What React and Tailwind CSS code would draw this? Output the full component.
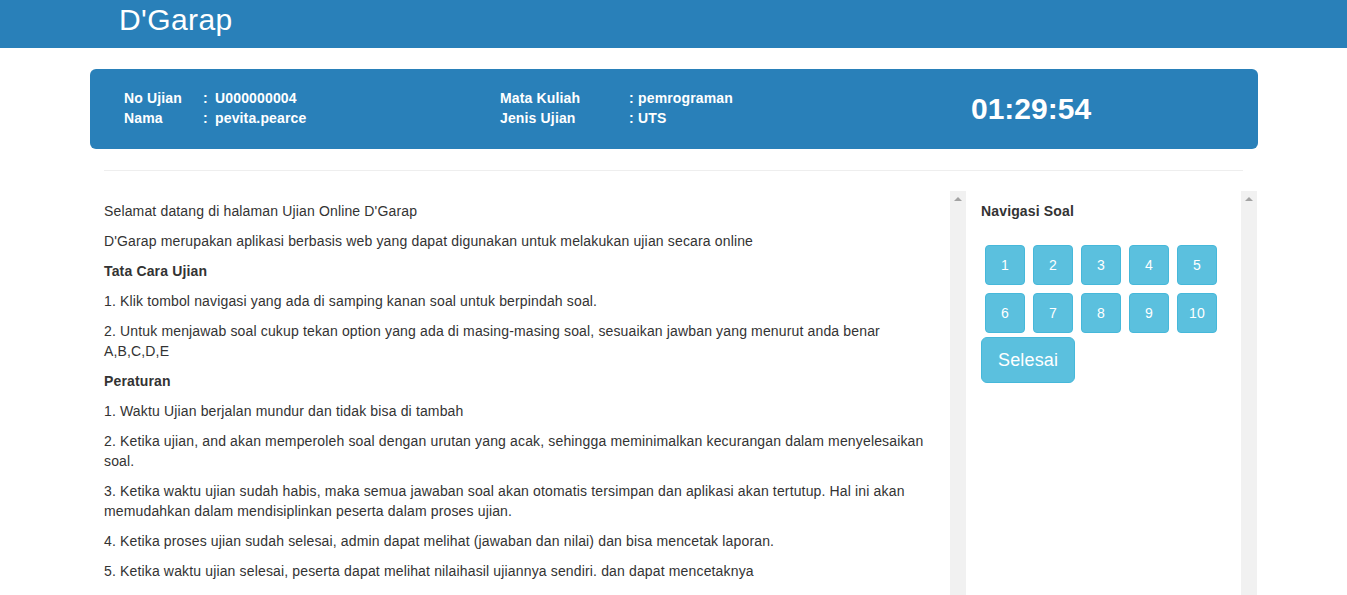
import React from 'react';

const font = { fontFamily: '"Liberation Sans", Arial, Helvetica, sans-serif' };

// fake scrollbar track with the up arrow, as in the screenshot
function ScrollTrack() {
  return (
    <div className="w-[16px] shrink-0 bg-[#f1f1f1] flex justify-center pt-[6px]">
      <div className="w-0 h-0 border-l-[4px] border-r-[4px] border-b-[4px] border-l-transparent border-r-transparent border-b-[#a3a3a3]" />
    </div>
  );
}

const paragraphs = [
  { text: "Selamat datang di halaman Ujian Online D'Garap" },
  { text: "D'Garap merupakan aplikasi berbasis web yang dapat digunakan untuk melakukan ujian secara online" },
  { text: 'Tata Cara Ujian', bold: true },
  { text: '1. Klik tombol navigasi yang ada di samping kanan soal untuk berpindah soal.' },
  { text: '2. Untuk menjawab soal cukup tekan option yang ada di masing-masing soal, sesuaikan jawban yang menurut anda benar A,B,C,D,E' },
  { text: 'Peraturan', bold: true },
  { text: '1. Waktu Ujian berjalan mundur dan tidak bisa di tambah' },
  { text: '2. Ketika ujian, and akan memperoleh soal dengan urutan yang acak, sehingga meminimalkan kecurangan dalam menyelesaikan soal.' },
  { text: '3. Ketika waktu ujian sudah habis, maka semua jawaban soal akan otomatis tersimpan dan aplikasi akan tertutup. Hal ini akan memudahkan dalam mendisiplinkan peserta dalam proses ujian.' },
  { text: '4. Ketika proses ujian sudah selesai, admin dapat melihat (jawaban dan nilai) dan bisa mencetak laporan.' },
  { text: '5. Ketika waktu ujian selesai, peserta dapat melihat nilaihasil ujiannya sendiri. dan dapat mencetaknya' },
];

export default function App() {
  return (
    <div className="min-h-screen bg-white text-[#333] text-[14px] leading-[20px] tracking-[0.15px]" style={font}>
      {/* Top bar */}
      <div className="h-[48px] bg-[#2980b9] pl-[119px]">
        <span className="text-white text-[30px] leading-[40px] tracking-[0.4px]">D'Garap</span>
      </div>

      {/* Info card */}
      <div className="ml-[90px] w-[1168px] mt-[21px] h-[80px] bg-[#2980b9] rounded-[6px] text-white font-bold flex items-start">
        <div className="pt-[19px] pl-[34px] w-[410px]">
          <div className="flex"><span className="w-[79px]">No Ujian</span><span className="w-[12px]">:</span><span>U000000004</span></div>
          <div className="flex"><span className="w-[79px]">Nama</span><span className="w-[12px]">:</span><span>pevita.pearce</span></div>
        </div>
        <div className="pt-[19px] w-[420px]">
          <div className="flex"><span className="w-[129px]">Mata Kuliah</span><span className="w-[9px]">:</span><span>pemrograman</span></div>
          <div className="flex"><span className="w-[129px]">Jenis Ujian</span><span className="w-[9px]">:</span><span>UTS</span></div>
        </div>
        <div className="pt-[22px] pl-[51px] text-[30px] leading-[36px] tracking-normal">01:29:54</div>
      </div>

      <div className="ml-[104px] w-[1139px] mt-[21px] border-t border-[#eeeeee]" />

      {/* Body panes */}
      <div className="ml-[104px] mt-[20px] flex h-[420px]">
        <div className="w-[846px] pt-[10px] pr-[10px]">
          {paragraphs.map((p, i) => (
            <p key={i} className={p.bold ? 'mb-[10px] font-bold' : 'mb-[10px]'}>{p.text}</p>
          ))}
        </div>
        <ScrollTrack />
        <div className="w-[275px] pt-[10px] pl-[15px]">
          <p className="font-bold mb-[20px]">Navigasi Soal</p>
          <div className="flex flex-wrap w-[250px]">
            {[1, 2, 3, 4, 5, 6, 7, 8, 9, 10].map((n) => (
              <button
                key={n}
                className="w-[40px] h-[40px] m-[4px] rounded-[4px] bg-[#5bc0de] border border-[#46b8da] text-white text-[14px]"
              >
                {n}
              </button>
            ))}
          </div>
          <button className="h-[46px] px-[16px] rounded-[6px] bg-[#5bc0de] border border-[#46b8da] text-white text-[18px] leading-[24px]">
            Selesai
          </button>
        </div>
        <ScrollTrack />
      </div>
    </div>
  );
}
